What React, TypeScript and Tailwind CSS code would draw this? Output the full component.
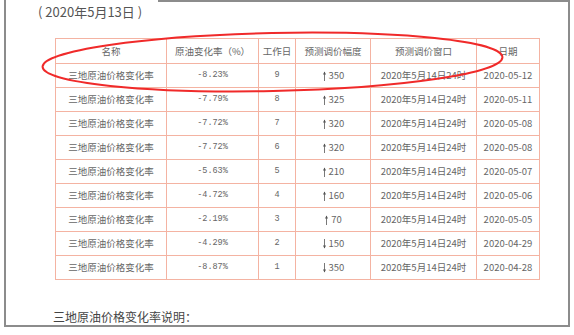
const rows = [
  { rate: "-8.23%", day: 9, dir: "up", amt: 350, date: "2020-05-12" },
  { rate: "-7.79%", day: 8, dir: "up", amt: 325, date: "2020-05-11" },
  { rate: "-7.72%", day: 7, dir: "up", amt: 320, date: "2020-05-08" },
  { rate: "-7.72%", day: 6, dir: "up", amt: 320, date: "2020-05-08" },
  { rate: "-5.63%", day: 5, dir: "up", amt: 210, date: "2020-05-07" },
  { rate: "-4.72%", day: 4, dir: "up", amt: 160, date: "2020-05-06" },
  { rate: "-2.19%", day: 3, dir: "up", amt: 70, date: "2020-05-05" },
  { rate: "-4.29%", day: 2, dir: "down", amt: 150, date: "2020-04-29" },
  { rate: "-8.87%", day: 1, dir: "down", amt: 350, date: "2020-04-28" },
];

const cjk = "font-['Noto_Sans_CJK_SC',sans-serif]";
const cell = "border border-[#f4b3a2] h-[24px] p-0 text-center align-middle";

const Arrow = ({ dir }: { dir: string }) => (
  <svg width="5" height="10" viewBox="0 0 5 10" className="inline-block mr-[2px] -mt-[2px] align-middle">
    {dir === "up" ? (
      <>
        <path d="M2.5 1 L2.5 10" stroke="#555" strokeWidth="0.8" />
        <path d="M1 3.4 L2.5 0.6 L4 3.4 Z" fill="#555" />
      </>
    ) : (
      <>
        <path d="M2.5 0 L2.5 9" stroke="#555" strokeWidth="0.8" />
        <path d="M1 6.6 L2.5 9.4 L4 6.6 Z" fill="#555" />
      </>
    )}
  </svg>
);

const App = () => {
  return (
    <div className={`relative w-[574px] h-[335px] bg-white overflow-hidden ${cjk}`}>
      <div className="relative ml-[4px] w-[566px] h-[327px] border-l-2 border-r-2 border-b-2 border-[#8c8c8c]">
        <div className="absolute top-[0px] left-[152px] right-[-2px] h-[2px] bg-[#8c8c8c]" />
        <div className="pl-[32px] pt-[3px] text-[13px] leading-[17px] text-[#555] whitespace-pre">( 2020年5月13日 )</div>

        <table className="mt-[18px] ml-[49px] w-[484px] table-fixed border-collapse border border-[#f0a08c] text-[9.5px] text-[#666]">
          <colgroup>
            <col className="w-[111px]" />
            <col className="w-[92px]" />
            <col className="w-[37px]" />
            <col className="w-[75px]" />
            <col className="w-[106px]" />
            <col className="w-[63px]" />
          </colgroup>
          <thead>
            <tr>
              <th className={`${cell} h-[25px] font-normal`}>名称</th>
              <th className={`${cell} font-normal`}>原油变化率（%）</th>
              <th className={`${cell} font-normal`}>工作日</th>
              <th className={`${cell} font-normal`}>预测调价幅度</th>
              <th className={`${cell} font-normal`}>预测调价窗口</th>
              <th className={`${cell} font-normal`}>日期</th>
            </tr>
          </thead>
          <tbody>
            {rows.map((r, i) => (
              <tr key={i}>
                <td className={cell}>三地原油价格变化率</td>
                <td className={`${cell} font-['Liberation_Mono',monospace] text-[8.5px]`}>{r.rate}</td>
                <td className={`${cell} font-['Liberation_Mono',monospace] text-[8.5px]`}>{r.day}</td>
                <td className={cell}>
                  <Arrow dir={r.dir} />
                  {r.amt}
                </td>
                <td className={cell}>2020年5月14日24时</td>
                <td className={cell}>{r.date}</td>
              </tr>
            ))}
          </tbody>
        </table>

        <div className="mt-[29px] pl-[47px] text-[12px] leading-[16px] text-[#444]">三地原油价格变化率说明：</div>
      </div>

      <svg className="absolute left-0 top-0 pointer-events-none" width="574" height="335" viewBox="0 0 574 335">
        <ellipse cx="272.5" cy="62" rx="230" ry="29" fill="none" stroke="#f02a2a" strokeWidth="2" transform="rotate(-1.2 272.5 62)" />
      </svg>
    </div>
  );
};

export default App;
